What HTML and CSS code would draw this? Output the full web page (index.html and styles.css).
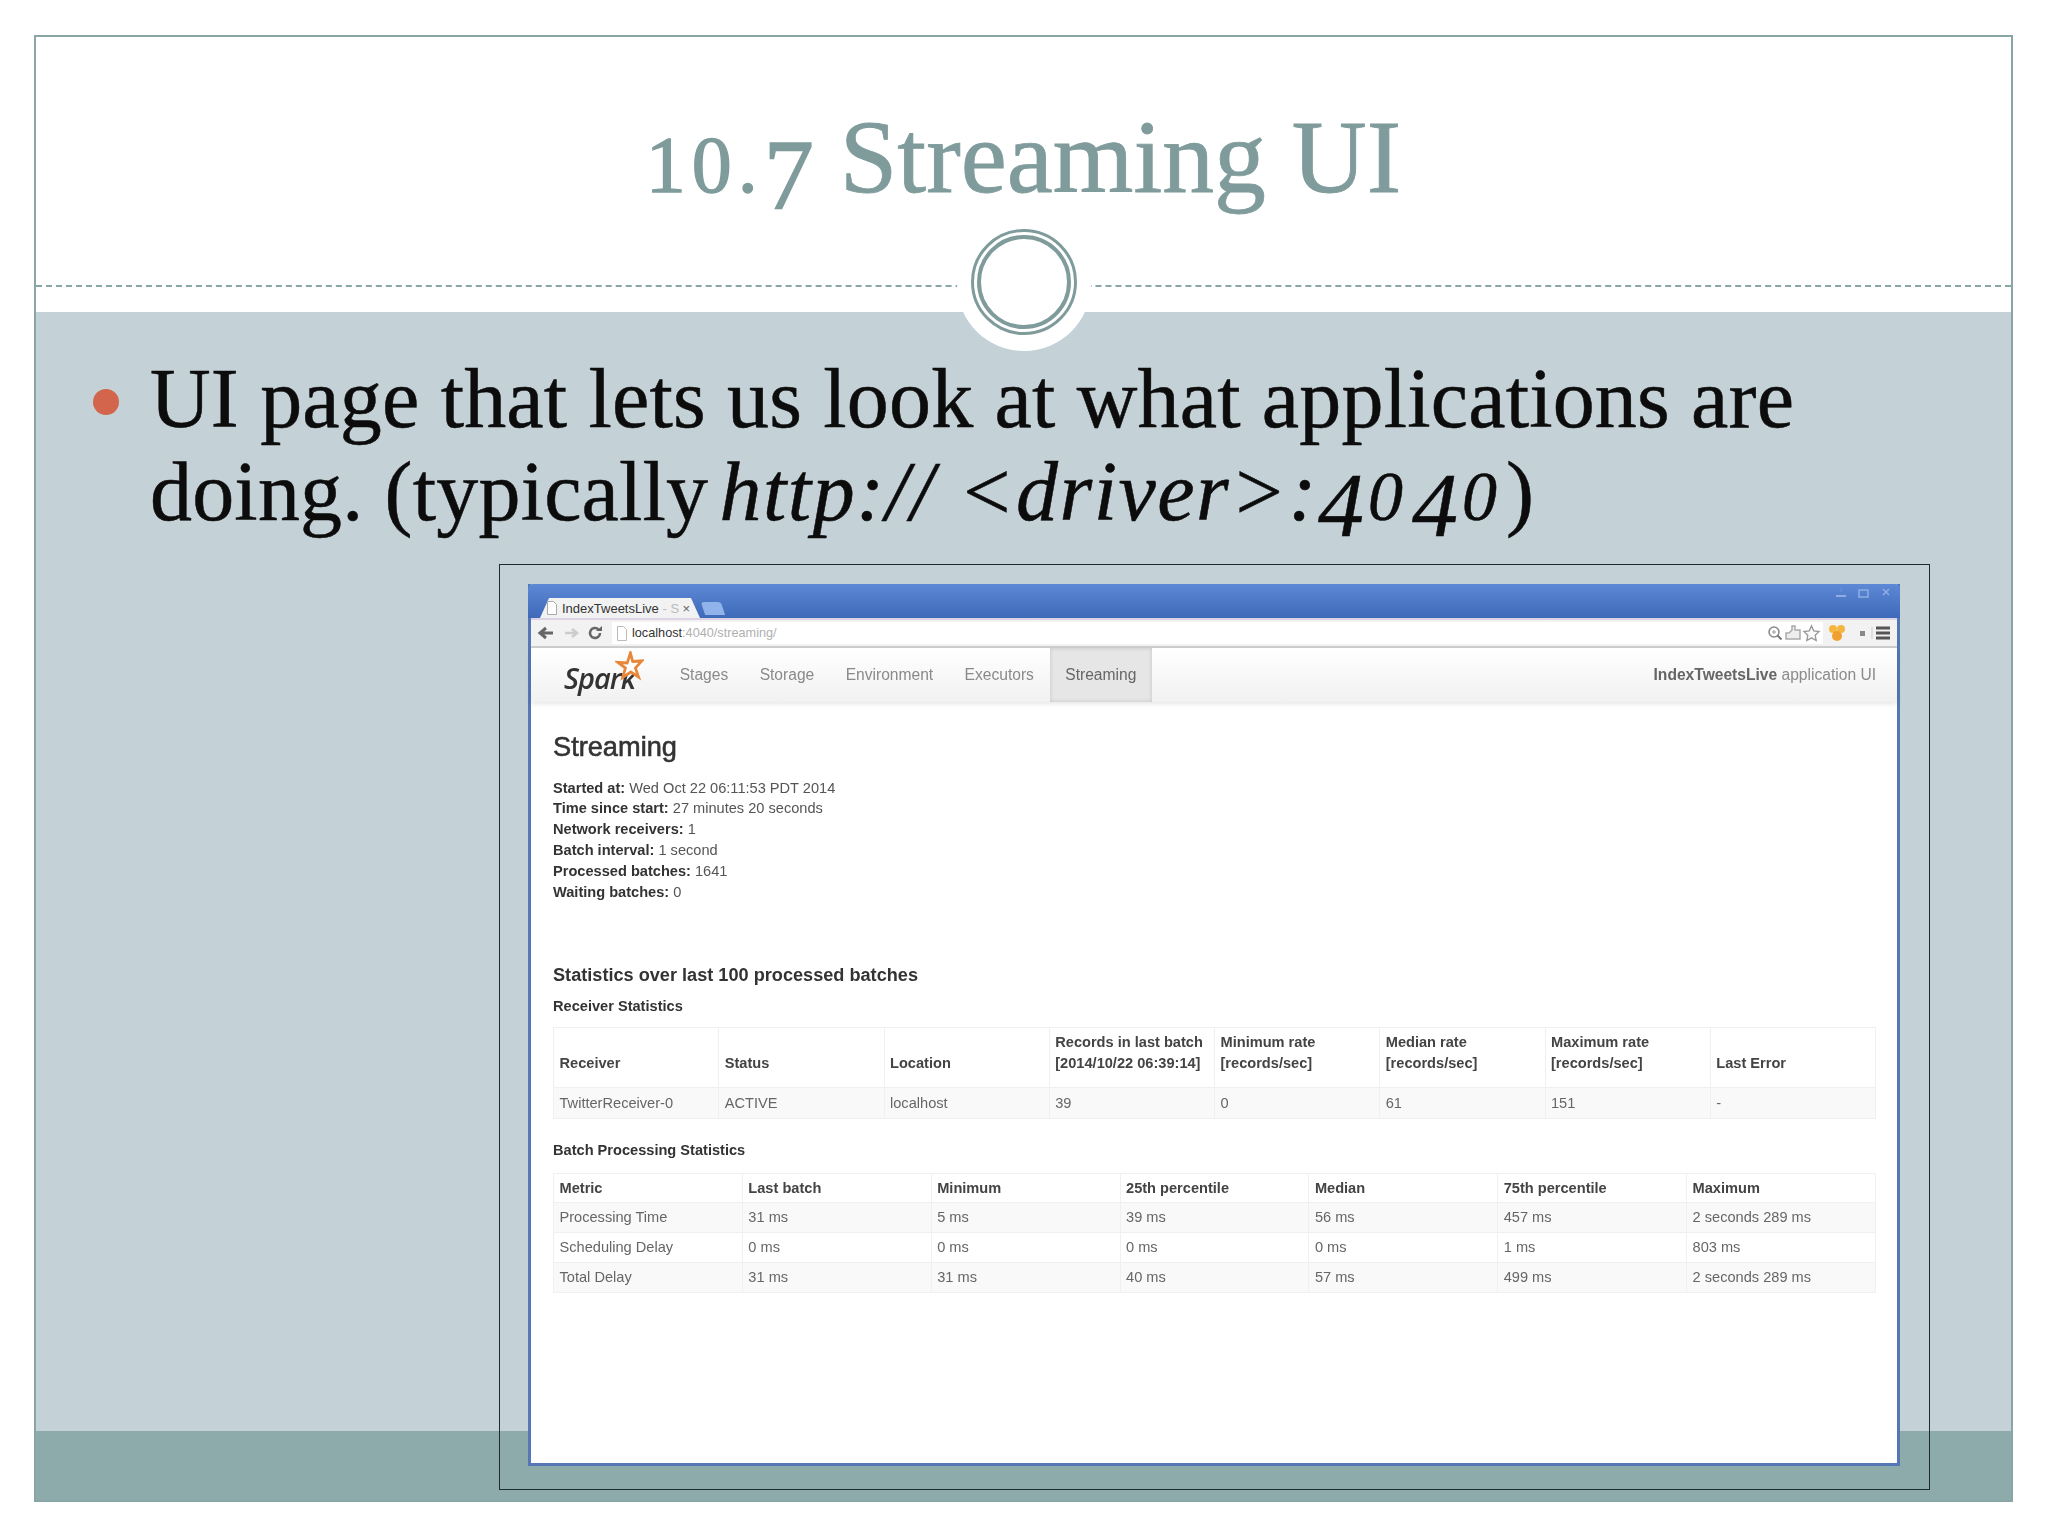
FILE: index.html
```html
<!DOCTYPE html>
<html>
<head>
	<title>10.7 Streaming UI</title>
	<meta charset="utf-8">
	<link rel="stylesheet" href="styles.css">
</head>
<body>

	<div class="slide">
		<header class="slide-head">
			<h1 class="slide-title"><span class="num-low">10.</span><span class="num-drop">7</span> Streaming UI</h1>
			<div class="rule"></div>
			<div class="medallion"><div class="ring"></div></div>
		</header>

		<section class="slide-body">
			<span class="bullet"></span>
			<p class="point">UI page that lets us look at what applications are doing. (typically <em>http:// &lt;driver&gt;:<span class="it-four">4</span><span class="it-zero">0</span><span class="it-four">4</span><span class="it-zero">0</span></em>)</p>
		</section>

		<div class="slide-band"></div>

		<figure class="shot">
			<div class="browser">
				<div class="tabstrip">
					<div class="tab">
						<svg class="tab-icon" width="12" height="14" viewBox="0 0 12 14"><path d="M1.5 .5h6l3 3v10h-9z" fill="#fff" stroke="#aaa"/></svg>
						<span class="tab-name">IndexTweetsLive <span class="tab-fade">- S</span></span>
						<span class="tab-close">×</span>
					</div>
					<div class="newtab"></div>
					<div class="winctl">
						<svg width="16" height="12" viewBox="0 0 16 12"><path d="M4 10h10" stroke="#8fade3" stroke-width="2"/><path d="M9 2v4" stroke="#6f93d2"/></svg>
						<svg width="16" height="12" viewBox="0 0 16 12"><path d="M3 4h9v7H3z" fill="none" stroke="#8fade3" stroke-width="1.5"/></svg>
						<svg width="12" height="12" viewBox="0 0 12 12"><path d="M3 3l6 6M9 3l-6 6" stroke="#8fade3" stroke-width="1.5"/></svg>
					</div>
				</div>

				<div class="toolbar">
					<svg class="tool-btn" width="18" height="14" viewBox="0 0 18 14"><path d="M16 7H5M9 2L3 7l6 5" fill="none" stroke="#666" stroke-width="3"/></svg>
					<svg class="tool-btn" width="18" height="14" viewBox="0 0 18 14"><path d="M3 7h10M10 3l5 4-5 4" fill="none" stroke="#ccc" stroke-width="2.5"/></svg>
					<svg class="tool-btn" width="16" height="16" viewBox="0 0 16 16"><path d="M13 8a5 5 0 1 1-1.6-3.7" fill="none" stroke="#666" stroke-width="2.5"/><path d="M9 6h6V1z" fill="#666"/></svg>
					<div class="omnibox">
						<svg width="12" height="15" viewBox="0 0 12 15"><path d="M1.5 .5h6l3 3v11h-9z" fill="#fff" stroke="#bbb"/></svg>
						<span class="url"><span class="url-host">localhost</span>:4040/streaming/</span>
						<span class="omni-icons">
							<svg width="18" height="18" viewBox="0 0 18 18"><circle cx="8" cy="8" r="5" fill="none" stroke="#888" stroke-width="1.5"/><path d="M11.5 11.5l4 4" stroke="#777" stroke-width="2"/><path d="M6 8h4M8 6v4" stroke="#999"/></svg>
							<svg width="18" height="18" viewBox="0 0 18 18"><path d="M2 9h3l3-3V2h3v4h5v9H2z" fill="#eee" stroke="#aaa" stroke-width="1.5"/></svg>
							<svg width="19" height="19" viewBox="0 0 20 20"><path d="M10 2l2.400 5.200 5.600.7-4.100 3.900 1 5.600-4.900-2.800-4.900 2.800 1-5.600L2 7.900l5.600-.7z" fill="#fafafa" stroke="#999" stroke-width="1.400"/></svg>
						</span>
					</div>
					<svg class="ext-icon" width="20" height="18" viewBox="0 0 20 18"><circle cx="6" cy="5" r="4" fill="#f4b63f"/><circle cx="14" cy="5" r="4" fill="#f4b63f"/><circle cx="10" cy="12" r="5" fill="#f0a030"/></svg>
					<svg class="ext-small" width="20" height="16" viewBox="0 0 20 16"><rect x="2" y="6" width="5" height="5" fill="#888"/><path d="M14 2v12" stroke="#ccc"/></svg>
					<svg class="menu-icon" width="16" height="14" viewBox="0 0 16 14"><path d="M1 2h14M1 7h14M1 12h14" stroke="#555" stroke-width="3"/></svg>
				</div>

				<nav class="sparknav">
					<div class="brand">
						<span class="brand-word">Spark</span>
						<svg class="brand-star" width="29" height="32" viewBox="0 0 32 32" preserveAspectRatio="none"><path d="M17 2l2.500 8.500 10-.5-7 7 3.500 9-8.500-5-9 5.500 3-9.500-8-5.500 10 .5z" fill="#fff" stroke="#e8873a" stroke-width="3"/></svg>
					</div>
					<a class="nav-item">Stages</a>
					<a class="nav-item">Storage</a>
					<a class="nav-item">Environment</a>
					<a class="nav-item">Executors</a>
					<a class="nav-item active">Streaming</a>
					<span class="app-name"><strong>IndexTweetsLive</strong> application UI</span>
				</nav>

				<div class="page">
					<h2 class="page-title">Streaming</h2>
					<ul class="facts">
						<li><strong>Started at:</strong> Wed Oct 22 06:11:53 PDT 2014</li>
						<li><strong>Time since start:</strong> 27 minutes 20 seconds</li>
						<li><strong>Network receivers:</strong> 1</li>
						<li><strong>Batch interval:</strong> 1 second</li>
						<li><strong>Processed batches:</strong> 1641</li>
						<li><strong>Waiting batches:</strong> 0</li>
					</ul>

					<h3 class="stats-title">Statistics over last 100 processed batches</h3>

					<h4 class="table-title">Receiver Statistics</h4>
					<table class="stats receivers">
						<tr>
							<th>Receiver</th>
							<th>Status</th>
							<th>Location</th>
							<th>Records in last batch<br>[2014/10/22 06:39:14]</th>
							<th>Minimum rate<br>[records/sec]</th>
							<th>Median rate<br>[records/sec]</th>
							<th>Maximum rate<br>[records/sec]</th>
							<th>Last Error</th>
						</tr>
						<tr>
							<td>TwitterReceiver-0</td>
							<td>ACTIVE</td>
							<td>localhost</td>
							<td>39</td>
							<td>0</td>
							<td>61</td>
							<td>151</td>
							<td>-</td>
						</tr>
					</table>

					<h4 class="table-title batch-title">Batch Processing Statistics</h4>
					<table class="stats batches">
						<tr>
							<th>Metric</th>
							<th>Last batch</th>
							<th>Minimum</th>
							<th>25th percentile</th>
							<th>Median</th>
							<th>75th percentile</th>
							<th>Maximum</th>
						</tr>
						<tr>
							<td>Processing Time</td>
							<td>31 ms</td>
							<td>5 ms</td>
							<td>39 ms</td>
							<td>56 ms</td>
							<td>457 ms</td>
							<td>2 seconds 289 ms</td>
						</tr>
						<tr>
							<td>Scheduling Delay</td>
							<td>0 ms</td>
							<td>0 ms</td>
							<td>0 ms</td>
							<td>0 ms</td>
							<td>1 ms</td>
							<td>803 ms</td>
						</tr>
						<tr>
							<td>Total Delay</td>
							<td>31 ms</td>
							<td>31 ms</td>
							<td>40 ms</td>
							<td>57 ms</td>
							<td>499 ms</td>
							<td>2 seconds 289 ms</td>
						</tr>
					</table>
				</div>
			</div>
		</figure>
	</div>

</body>
</html>
```

FILE: styles.css
```css
body{
	margin: 0;
	background-color: white;
	font-family: "Liberation Serif", serif;
}

/* slide frame */
.slide{
	box-sizing: border-box;
	width: 1979px;
	height: 1467px;
	margin: 35px 0 0 34px;
	border: 2px solid #8aa5a5;
	display: grid;
	grid-template-rows: 275px 1fr 69px;
	grid-template-columns: 1fr;
}

.slide-head{
	grid-area: 1 / 1;
	position: relative;
	background-color: white;
	z-index: 1;
}

.slide-title{
	margin: 0;
	padding-top: 63px;
	height: 115px;
	text-align: center;
	font-size: 103.700px;
	line-height: 115px;
	font-weight: normal;
	color: #7f9b9b;
	white-space: nowrap;
	-webkit-text-stroke: 0.8px #7f9b9b;
}

.num-low{
	font-size: 80px;
	line-height: 0;
	letter-spacing: 6px;
	-webkit-text-stroke: 1.400px #7f9b9b;
}

.num-drop{
	font-size: 100px;
	line-height: 0;
	vertical-align: -16px;
	-webkit-text-stroke: 1.400px #7f9b9b;
}

.rule{
	position: absolute;
	left: 0;
	right: 0;
	top: 248px;
	border-top: 2px dashed #8aa5a5;
}

.medallion{
	position: absolute;
	left: 921px;
	top: 180px;
	box-sizing: border-box;
	width: 134px;
	height: 134px;
	padding-bottom: 4px;
	border-radius: 50%;
	background-color: white;
	display: flex;
	align-items: center;
	justify-content: center;
}

.ring{
	box-sizing: border-box;
	width: 106px;
	height: 106px;
	border-radius: 50%;
	border: 3px solid #7f9b9b;
	padding: 3px;
	background-color: white;
}

.ring::after{
	content: "";
	display: block;
	box-sizing: border-box;
	width: 100%;
	height: 100%;
	border-radius: 50%;
	border: 4px solid #7f9b9b;
}

.slide-body{
	grid-area: 2 / 1;
	background-color: #c4d1d6;
	display: flex;
	align-items: flex-start;
	padding: 40px 0 0 57px;
}

.bullet{
	flex: none;
	width: 26px;
	height: 26px;
	margin-top: 37px;
	border-radius: 50%;
	background-color: #d2654b;
}

.point{
	margin: 0 0 0 31px;
	width: 1680px;
	font-size: 84px;
	line-height: 93px;
	letter-spacing: 0.18px;
	color: #0c0c0c;
	-webkit-text-stroke: 0.5px #0c0c0c;
}

.point em{
	margin-left: -10px;
	letter-spacing: 1.500px;
}

.it-four{
	font-size: 92px;
	line-height: 0;
	vertical-align: -16px;
	letter-spacing: 4px;
}

.it-zero{
	font-size: 70px;
	line-height: 0;
	letter-spacing: 9px;
}

.slide-band{
	grid-area: 3 / 1;
	background-color: #8dabab;
}

/* screenshot */
.shot{
	grid-area: 2 / 1 / 4 / 1;
	z-index: 2;
	justify-self: end;
	align-self: end;
	box-sizing: border-box;
	width: 1431px;
	height: 926px;
	margin: 0 81px 10px 0;
	border: 1px solid #1f2b2e;
	padding: 19px 29px 23px 28px;
}

.browser{
	box-sizing: border-box;
	height: 100%;
	border: 3px solid #5577b5;
	border-top: none;
	background-color: white;
	display: flex;
	flex-direction: column;
	font-family: "Liberation Sans", sans-serif;
	filter: blur(0.7px);
}

.tabstrip{
	flex: none;
	height: 34px;
	margin: 0 -3px;
	padding: 0 3px 0 12px;
	background: linear-gradient(#5d88d6, #3f6ab9);
	border-radius: 5px 5px 0 0;
	display: flex;
	align-items: flex-end;
}

.tab{
	box-sizing: border-box;
	width: 160px;
	height: 20px;
	padding: 0 5px 0 6px;
	background-color: #f2f2f2;
	clip-path: polygon(0 100%, 9px 0, calc(100% - 9px) 0, 100% 100%);
	display: flex;
	align-items: center;
	font-size: 13px;
	color: #333;
}

.tab-icon{
	flex: none;
	margin-right: 4px;
}

.tab-name{
	flex: 1;
	white-space: nowrap;
}

.tab-fade{
	color: #bbb;
}

.tab-close{
	flex: none;
	margin-right: 5px;
	color: #666;
}

.newtab{
	width: 20px;
	height: 13px;
	margin: 0 0 3px 3px;
	border-radius: 3px 3px 0 0;
	transform: skewX(18deg);
	background-color: #8fb3ea;
}

.winctl{
	margin-left: auto;
	align-self: flex-start;
	padding: 2px 5px 0 0;
	display: flex;
	gap: 8px;
}

.toolbar{
	flex: none;
	box-sizing: border-box;
	height: 30px;
	padding: 0 6px 0 6px;
	background-color: #f2f2f2;
	border-top: 2px solid #dcd3e4;
	border-bottom: 2px solid #cfcfcf;
	display: flex;
	align-items: center;
	gap: 7px;
}

.omnibox{
	flex: 1;
	height: 22px;
	margin-left: 2px;
	padding: 0 2px 0 4px;
	background-color: white;
	display: flex;
	align-items: center;
	gap: 4px;
	font-size: 12.700px;
	color: #b0b0b0;
}

.url-host{
	color: #333;
}

.omni-icons{
	margin-left: auto;
	display: flex;
	align-items: center;
}

.ext-icon{
	margin-left: -3px;
}

.ext-small{
	margin-left: 4px;
}

.menu-icon{
	margin-left: -10px;
}

.sparknav{
	flex: none;
	height: 54px;
	background: linear-gradient(#fff, #f1f1f1);
	box-shadow: 0 2px 5px rgba(0, 0, 0, 0.1);
	display: flex;
	align-items: stretch;
	font-size: 15.600px;
	color: #8a8a8a;
}

.brand{
	position: relative;
	width: 133px;
	flex: none;
}

.brand-word{
	position: absolute;
	left: 33px;
	top: 12px;
	font-family: "Open Sans", sans-serif;
	font-style: italic;
	font-weight: 600;
	font-size: 29px;
	line-height: 36px;
	letter-spacing: -1px;
	color: #333;
}

.brand-star{
	position: absolute;
	left: 84px;
	top: 3px;
}

.nav-item{
	padding: 0 15.700px;
	display: flex;
	align-items: center;
}

.nav-item.active{
	background-color: #e6e6e6;
	box-shadow: inset 0 0 4px rgba(0, 0, 0, 0.15);
	color: #666;
}

.app-name{
	margin-left: auto;
	padding-right: 21px;
	align-self: center;
}

.app-name strong{
	color: #666;
}

/* page inside the screenshot */
.page{
	flex: 1;
	padding: 28px 21px 0 22px;
	color: #555;
	font-size: 14.600px;
}

.page-title{
	margin: 0;
	font-size: 27.200px;
	line-height: 34px;
	font-weight: normal;
	color: #333;
	-webkit-text-stroke: 0.6px #333;
}

.facts{
	list-style: none;
	margin: 13.600px 0 0;
	padding: 0;
	line-height: 20.800px;
}

.facts strong, .stats-title, .table-title{
	color: #333;
}

.stats-title{
	margin: 61px 0 0;
	font-size: 18.150px;
	line-height: 24px;
}

.table-title{
	margin: 9px 0 0;
	font-size: 14.600px;
	line-height: 20px;
}

.batch-title{
	margin-top: 21px;
}

.stats{
	width: 100%;
	margin-top: 11px;
	border-collapse: collapse;
	table-layout: fixed;
	line-height: 20.800px;
}

.batches{
	margin-top: 13px;
}

.stats th, .stats td{
	border: 1px solid #f0f0f0;
	padding: 0 0 0 5.500px;
	text-align: left;
	color: #666;
	white-space: nowrap;
}

.stats th{
	color: #444;
}

.stats tr:nth-child(even) td{
	background-color: #f9f9f9;
}

.receivers th{
	vertical-align: bottom;
	padding-bottom: 14px;
}

.receivers tr:first-child{
	height: 60px;
}

.receivers tr:last-child{
	height: 31px;
}

.batches tr{
	height: 30px;
}

.batches tr:first-child{
	height: 29px;
}
```
